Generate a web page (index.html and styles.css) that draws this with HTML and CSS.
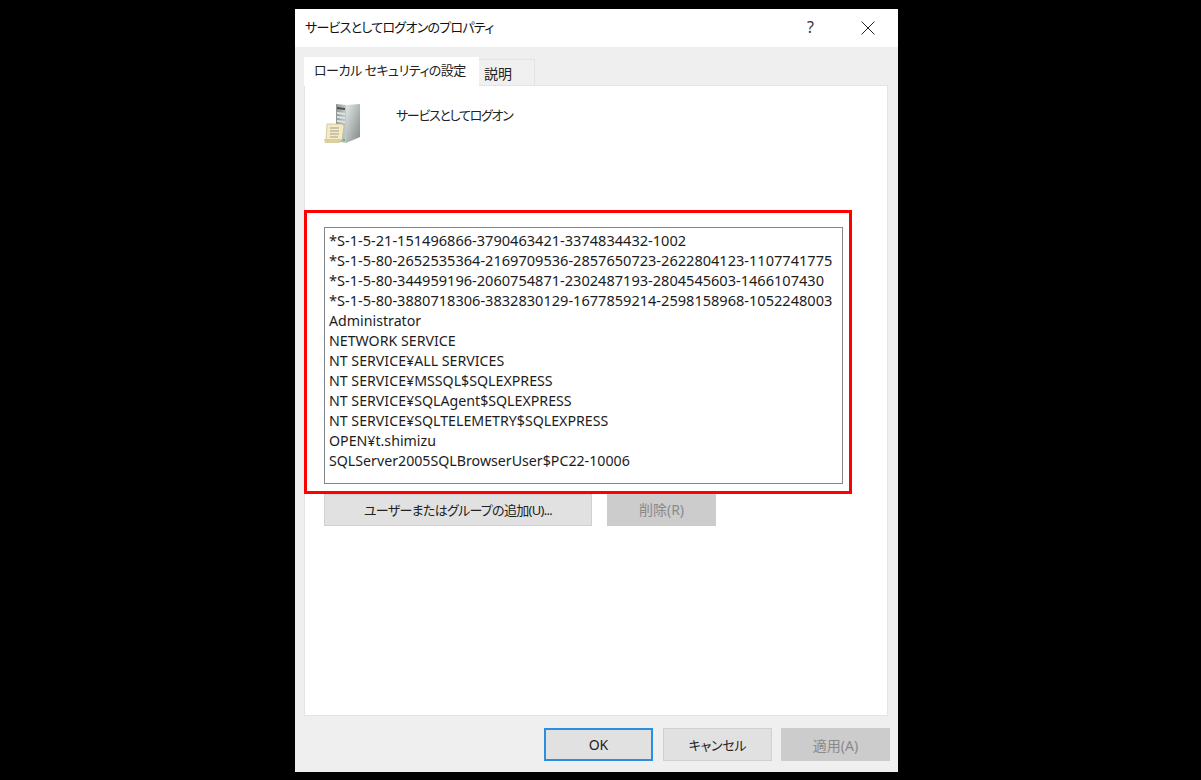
FILE: index.html
```html
<!DOCTYPE html>
<html lang="ja">
<head>
<meta charset="utf-8">
<title>サービスとしてログオンのプロパティ</title>
<link rel="stylesheet" href="styles.css">
</head>
<body>
<div class="dialog">
  <header class="titlebar">
    <span class="title">サービスとしてログオンのプロパティ</span>
    <span class="help">?</span>
    <svg class="close" width="14" height="14" viewBox="0 0 14 14"><path d="M.5.5l13 13M13.5.5l-13 13" stroke="#222" fill="none"/></svg>
  </header>
  <main class="content">
    <nav class="tabs">
      <div class="tab active">ローカル セキュリティの設定</div>
      <div class="tab">説明</div>
    </nav>
    <section class="panel">
      <div class="policy">
        <svg class="policy-icon" width="38" height="42" viewBox="0 0 38 42">
          <defs>
            <linearGradient id="side" x1="0" x2="1" y1="0" y2="1"><stop offset="0" stop-color="#e4e7e7"/><stop offset="1" stop-color="#7f8a88"/></linearGradient>
            <linearGradient id="front" x1="0" x2="1"><stop offset="0" stop-color="#8d9694"/><stop offset="1" stop-color="#c5cbca"/></linearGradient>
          </defs>
          <path d="M13 1l10 1v38l-10-2z" fill="url(#front)"/>
          <path d="M23 2l14-1v33l-14 6z" fill="url(#side)"/>
          <path d="M14 4l8 1v2l-8-1z" fill="#4a5250"/>
          <path d="M14 9l8 1v2l-8-1zM14 13l8 1v2l-8-1zM14 17l8 1v2l-8-1z" fill="#dfe4e4"/>
          <rect x="20" y="36" width="2" height="2" fill="#58c04a"/>
          <path d="M4 21h15l2 2-2 14H3z" fill="#f3eac6" stroke="#c5b98c" stroke-width=".7"/>
          <path d="M7 25h9M7 28h9M7 31h9M7 34h8" stroke="#a79f84"/>
          <path d="M1 36h17l-1 4H2z" fill="#dccf9f"/>
        </svg>
        <span class="policy-name">サービスとしてログオン</span>
      </div>
      <ul class="listbox">
        <li class="sid">*S-1-5-21-151496866-3790463421-3374834432-1002</li>
        <li class="sid">*S-1-5-80-2652535364-2169709536-2857650723-2622804123-1107741775</li>
        <li class="sid">*S-1-5-80-344959196-2060754871-2302487193-2804545603-1466107430</li>
        <li class="sid">*S-1-5-80-3880718306-3832830129-1677859214-2598158968-1052248003</li>
        <li>Administrator</li>
        <li>NETWORK SERVICE</li>
        <li>NT SERVICE¥ALL SERVICES</li>
        <li>NT SERVICE¥MSSQL$SQLEXPRESS</li>
        <li>NT SERVICE¥SQLAgent$SQLEXPRESS</li>
        <li>NT SERVICE¥SQLTELEMETRY$SQLEXPRESS</li>
        <li>OPEN¥t.shimizu</li>
        <li>SQLServer2005SQLBrowserUser$PC22-10006</li>
      </ul>
      <div class="list-actions">
        <button class="btn add">ユーザーまたはグループの追加(U)...</button>
        <button class="btn remove" disabled>削除(R)</button>
      </div>
      <div class="highlight"></div>
    </section>
    <footer class="footer">
      <button class="btn foot default">OK</button>
      <button class="btn foot cancel">キャンセル</button>
      <button class="btn foot" disabled>適用(A)</button>
    </footer>
  </main>
</div>
</body>
</html>
```
FILE: styles.css
```css
* { box-sizing: border-box; }
html, body { margin: 0; height: 100%; }
body {
  background: #000;
  padding: 9px 0 0 295px;
  font-family: "Noto Sans", "Noto Sans CJK JP", sans-serif;
  font-size: 14px;
  font-feature-settings: "palt";
  color: #222;
}
.dialog { width: 603px; height: 763px; background: #efefef; display: flex; flex-direction: column; }
.titlebar {
  height: 38px; background: #fff; display: flex; align-items: center;
  padding: 0 23px 3px 10px;
}
.title { font-size: 13px; letter-spacing: -0.75px; flex: 1; color: #111; white-space: nowrap; }
.help { font-size: 16px; margin-right: 47px; color: #333; }
.close { display: block; margin-top: 3px; }
.content { flex: 1; display: flex; flex-direction: column; padding: 10px 9px 11px 9px; }
.tabs { display: flex; align-items: flex-end; height: 28px; margin-right: 1px; position: relative; z-index: 1; }
.tab {
  height: 26px; padding: 2px 5px 0; width: 56px; background: #f0f0f0;
  border: 1px solid #e3e3e3; border-left: 0; border-bottom: 0; font-size: 14px; white-space: nowrap; line-height: 24px;
}
.tab.active { height: 29px; width: 175px; margin-bottom: -1px; background: #fff; border: 0; padding: 0 10px; line-height: 27px; font-size: 13px; letter-spacing: -0.5px; }
.panel {
  position: relative; width: 584px; height: 631px; background: #fff; border: 1px solid #e4e4e4;
  padding: 0 19px; flex: none;
}
.policy { height: 141px; display: flex; align-items: flex-start; padding-top: 17px; }
.policy-icon { display: block; flex: none; margin: 0 0 0 -1px; }
.policy-name { margin: 0 0 0 35px; font-size: 13px; letter-spacing: -1.3px; line-height: 24px; white-space: nowrap; }
.listbox {
  list-style: none; margin: 0; width: 519px; height: 257px; padding: 3px 0 0 4px;
  border: 1px solid #82878b; background: #fff;
  font-size: 14.2px; line-height: 20px; color: #1c1c1c; white-space: nowrap;
}
.sid { font-size: 14.57px; }
.sid:first-child { margin-top: -1px; }
.sid:nth-child(4) { margin-bottom: 1px; }
.list-actions { display: flex; gap: 15px; margin-top: 10px; }
.btn {
  height: 32px; font: inherit; font-size: 14px; color: #222; background: #e1e1e1;
  border: 1px solid #d0d0d0; padding: 0 0 2px; white-space: nowrap;
}
.btn:disabled { background: #cccccc; border-color: #cccccc; color: #8a8a8a; }
.add { width: 268px; font-size: 13px; letter-spacing: -0.7px; }
.remove { width: 109px; }
.highlight {
  position: absolute; left: -1px; top: 124px; width: 548px; height: 284px;
  border: 3px solid #f00; pointer-events: none;
}
.footer { display: flex; gap: 9px; padding: 12px 0 0 240px; margin-right: -2px; }
.foot { width: 109px; height: 33px; padding: 0; }
.foot.default { border: 2px solid #2a8fe0; margin-right: 1px; }
.foot.cancel { font-size: 13px; letter-spacing: -0.3px; }
```
